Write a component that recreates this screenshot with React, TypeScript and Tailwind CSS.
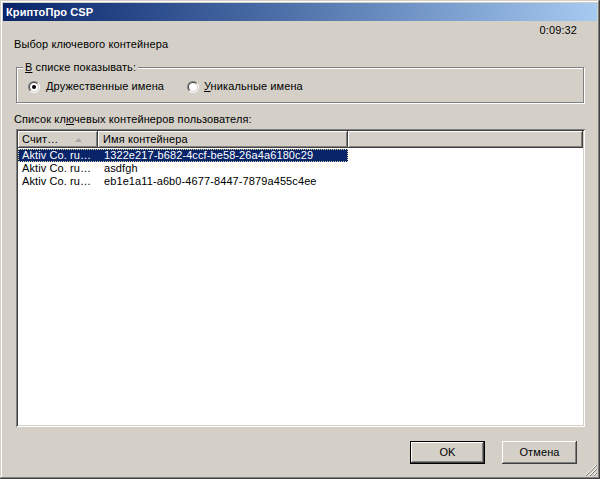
import React from "react";

const FONT = "font-['Liberation_Sans',Arial,sans-serif]";

const ROWS = [
  { reader: "Aktiv Co. ru…", name: "1322e217-b682-4ccf-be58-26a4a6180c29", selected: true },
  { reader: "Aktiv Co. ru…", name: "asdfgh", selected: false },
  { reader: "Aktiv Co. ru…", name: "eb1e1a11-a6b0-4677-8447-7879a455c4ee", selected: false },
];

function Radio({ checked }: { checked: boolean }) {
  return (
    <div className="h-[12px] w-[12px] shrink-0 rounded-full border border-t-[#808080] border-l-[#808080] border-r-white border-b-white">
      <div className="flex h-full w-full items-center justify-center rounded-full border border-t-[#404040] border-l-[#404040] border-r-[#d4d0c8] border-b-[#d4d0c8] bg-white">
        {checked && <div className="h-[4px] w-[4px] rounded-full bg-black" />}
      </div>
    </div>
  );
}

function Button({ label, isDefault }: { label: string; isDefault?: boolean }) {
  return (
    <div
      className={`flex h-[23px] w-[75px] items-center justify-center bg-[#d4d0c8] text-black ${
        isDefault
          ? "border border-black shadow-[inset_-1px_-1px_0_#404040,inset_1px_1px_0_#fff,inset_-2px_-2px_0_#808080]"
          : "shadow-[inset_-1px_-1px_0_#404040,inset_1px_1px_0_#fff,inset_-2px_-2px_0_#808080]"
      }`}
    >
      {label}
    </div>
  );
}

export default function App() {
  return (
    <div
      className={`${FONT} relative flex h-[479px] w-[600px] flex-col bg-[#d4d0c8] p-[3px] text-[11px] leading-[13px] tracking-[0.1px] text-black shadow-[inset_-1px_-1px_0_#404040,inset_1px_1px_0_#d4d0c8,inset_-2px_-2px_0_#808080,inset_2px_2px_0_#fff]`}
    >
      <div className="flex h-[18px] items-center bg-gradient-to-r from-[#0a246a] to-[#a6caf0] pl-[3px] text-[11px] font-bold text-white">
        КриптоПро CSP
      </div>

      <div className="mt-[3px] h-[13px] pr-[20px] text-right">0:09:32</div>
      <div className="mt-[1px] h-[13px] pl-[11px]">Выбор ключевого контейнера</div>

      <div className="relative ml-[13px] mr-[13px] mt-[16px] h-[36px] border border-[#808080] shadow-[1px_1px_0_#fff,inset_1px_1px_0_#fff]">
        <span className="absolute -top-[7px] left-[6px] bg-[#d4d0c8] px-[2px]">
          <span className="underline">В</span> списке показывать:
        </span>
        <div className="flex items-center pl-[11px] pt-[12px]">
          <div className="flex w-[159px] items-center gap-[6px]">
            <Radio checked />
            <span>
              <span className="underline">Д</span>ружественные имена
            </span>
          </div>
          <div className="flex items-center gap-[5px]">
            <Radio checked={false} />
            <span>
              <span className="underline">У</span>никальные имена
            </span>
          </div>
        </div>
      </div>

      <div className="mt-[10px] h-[13px] pl-[11px]">
        Список кл<span className="underline">ю</span>чевых контейнеров пользователя:
      </div>

      <div className="ml-[13px] mr-[12px] mt-[3px] h-[298px] bg-white p-[2px] shadow-[inset_1px_1px_0_#808080,inset_-1px_-1px_0_#fff,inset_2px_2px_0_#404040,inset_-2px_-2px_0_#d4d0c8]">
        <div className="flex h-[17px] bg-[#d4d0c8]">
          <div className="flex w-[80px] items-center justify-between pl-[4px] pr-[16px] shadow-[inset_-1px_-1px_0_#404040,inset_1px_1px_0_#fff,inset_-2px_-2px_0_#808080]">
            <span>Счит…</span>
            <svg width="7" height="4" viewBox="0 0 7 4">
              <polygon points="3.5,0 7,4 0,4" fill="#a8a8a8" />
            </svg>
          </div>
          <div className="flex w-[250px] items-center pl-[5px] shadow-[inset_-1px_-1px_0_#404040,inset_1px_1px_0_#fff,inset_-2px_-2px_0_#808080]">
            Имя контейнера
          </div>
          <div className="flex-1 shadow-[inset_-1px_-1px_0_#404040,inset_1px_1px_0_#fff,inset_-2px_-2px_0_#808080]" />
        </div>
        <div className="pt-[1px]">
          {ROWS.map((row) => (
            <div
              key={row.name}
              className={`flex h-[13px] w-[330px] items-center ${
                row.selected
                  ? "bg-[#0a246a] text-white outline-1 -outline-offset-1 outline-dotted outline-[#d8d49a]"
                  : ""
              }`}
            >
              <span className="w-[80px] pl-[4px]">{row.reader}</span>
              <span className="pl-[6px]">{row.name}</span>
            </div>
          ))}
        </div>
      </div>

      <div className="mt-[14px] flex justify-end gap-[17px] pr-[20px]">
        <Button label="OK" isDefault />
        <Button label="Отмена" />
      </div>

      <svg className="absolute bottom-[3px] right-[3px]" width="12" height="12" viewBox="0 0 12 12">
        <line x1="11" y1="1" x2="1" y2="11" stroke="#fff" />
        <line x1="12" y1="1" x2="1" y2="12" stroke="#808080" />
        <line x1="11" y1="5" x2="5" y2="11" stroke="#fff" />
        <line x1="12" y1="5" x2="5" y2="12" stroke="#808080" />
        <line x1="11" y1="9" x2="9" y2="11" stroke="#fff" />
        <line x1="12" y1="9" x2="9" y2="12" stroke="#808080" />
      </svg>
    </div>
  );
}
